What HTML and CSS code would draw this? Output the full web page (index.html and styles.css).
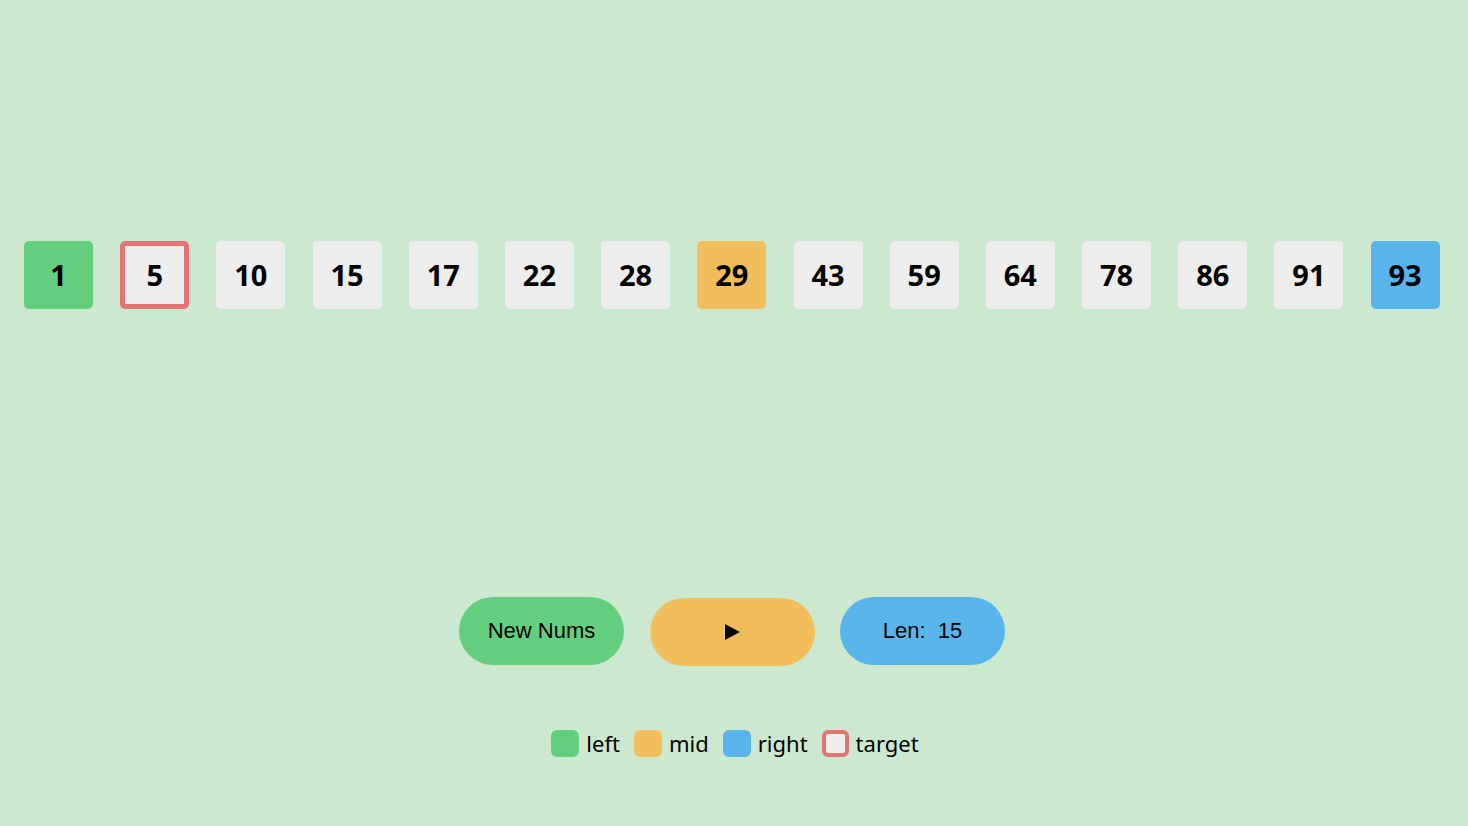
FILE: index.html
```html
<!DOCTYPE html>
<html>
<head>
<meta charset="utf-8">
<link rel="stylesheet" href="styles.css">
</head>
<body>
<div class="page">
  <div class="row">
    <div class="cell left">1</div>
    <div class="cell target">5</div>
    <div class="cell">10</div>
    <div class="cell">15</div>
    <div class="cell">17</div>
    <div class="cell">22</div>
    <div class="cell">28</div>
    <div class="cell mid">29</div>
    <div class="cell">43</div>
    <div class="cell">59</div>
    <div class="cell">64</div>
    <div class="cell">78</div>
    <div class="cell">86</div>
    <div class="cell">91</div>
    <div class="cell right">93</div>
  </div>
  <div class="controls">
    <button class="btn btn-green">New Nums</button>
    <button class="btn btn-orange btn-play"><svg width="15" height="16" viewBox="0 0 15 16"><polygon points="0,0 15,8 0,16" fill="#000"/></svg></button>
    <button class="btn btn-blue">Len:&nbsp; 15</button>
  </div>
  <div class="legend">
    <span class="sw sw-green"></span><span class="lab">left</span>
    <span class="sw sw-orange"></span><span class="lab">mid</span>
    <span class="sw sw-blue"></span><span class="lab">right</span>
    <span class="sw sw-target"></span><span class="lab">target</span>
  </div>
</div>
</body>
</html>
```
FILE: styles.css
```css
html, body {
  margin: 0;
  padding: 0;
  background: #cce8cf;
}
.page {
  width: 1468px;
  height: 826px;
  box-sizing: border-box;
  padding-top: 241px;
  display: flex;
  flex-direction: column;
  align-items: stretch;
}
.row {
  display: flex;
  padding-left: 24px;
  gap: 27.2px;
}
.cell {
  width: 69px;
  height: 68px;
  flex: none;
  box-sizing: border-box;
  border-radius: 5px;
  background: #eeeeee;
  display: flex;
  align-items: center;
  justify-content: center;
  font-family: "Noto Sans", "Open Sans", sans-serif;
  font-weight: 700;
  font-size: 29px;
  color: #000;
  padding-bottom: 2px;
}
.cell.left { background: #63cf7e; }
.cell.mid { background: #f2be5c; }
.cell.right { background: #5ab4ec; }
.cell.target { border: 5px solid #e27574; }
.controls {
  margin-top: 288px;
  display: flex;
  justify-content: center;
  gap: 26px;
  padding-right: 4px;
}
.btn {
  width: 165px;
  height: 68px;
  border: none;
  border-radius: 34px;
  font-family: "Liberation Sans", Arial, sans-serif;
  font-size: 22px;
  color: #000;
  display: flex;
  align-items: center;
  justify-content: center;
  padding: 0;
}
.btn-green { background: #63cf7e; }
.btn-orange { background: #f2be5c; margin-top: 1px; margin-right: -1px; }
.btn-blue { background: #5ab4ec; }
.btn-play svg { display: block; }
.legend {
  margin-top: 64px;
  display: flex;
  justify-content: center;
  align-items: center;
  font-family: "Noto Sans", "Open Sans", sans-serif;
  font-size: 22px;
  color: #000;
  padding-left: 2px;
}
.sw {
  width: 28px;
  height: 27px;
  box-sizing: border-box;
  border-radius: 6px;
  margin-right: 7px;
}
.sw-green { background: #63cf7e; }
.sw-orange { background: #f2be5c; }
.sw-blue { background: #5ab4ec; }
.sw-target { background: #eeeeee; border: 4px solid #e27574; width: 27px; }
.lab { margin-right: 14px; line-height: 27px; }
.lab:last-child { margin-right: 0; }
```
